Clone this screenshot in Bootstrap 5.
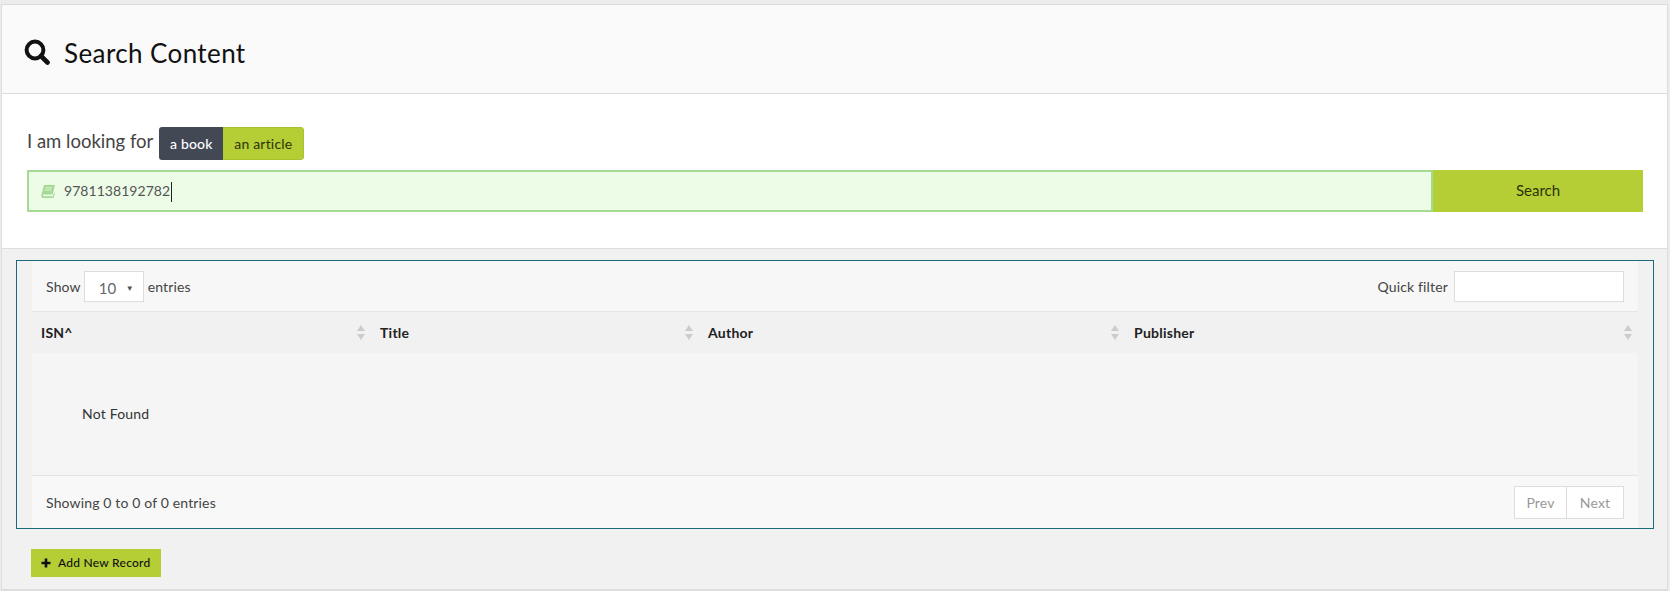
<!DOCTYPE html>
<html lang="en">
<head>
<meta charset="utf-8">
<title>Search Content</title>
<link href="https://cdn.jsdelivr.net/npm/bootstrap@5.3.0/dist/css/bootstrap.min.css" rel="stylesheet">
<style>
html,body{height:591px;overflow:hidden}
body{background:#ececec;font-family:Lato,"Noto Sans",sans-serif;font-size:14px;color:#333;padding:4px 2px 0 1px}
.shell{height:587px;border:1px solid #ddd;border-bottom-width:2px;background:#f1f1f1;display:flex;flex-direction:column}
.head-bar{height:89px;flex:none;background:#fafafa;border-bottom:1px solid #ddd;padding:6px 22px 0;gap:14px}
.head-bar h1{font-size:26px;font-weight:400;color:#111;margin:4px 0 0;letter-spacing:.4px}
.form-area{height:155px;flex:none;background:#fff;border-bottom:1px solid #ddd;padding:33px 24px 0 25px}
.look-row{height:33px;margin-bottom:10px;gap:6px;font-size:18.5px;color:#444;font-weight:400}
.look-row>span{position:relative;top:-2px}
.toggle-pair{height:33px;border-radius:3px;overflow:hidden;font-size:14px;letter-spacing:.2px;font-weight:400}
.tog{display:flex;align-items:center;justify-content:center;height:100%}
.tog-on{width:64px;background:#424955;color:#fff;font-weight:500}
.tog-off{width:81px;background:#b5ce36;color:#2c3306;border:1px solid #a9c22e;border-left:0;border-radius:0 3px 3px 0}
.isbn-wrap{flex:1;height:42px;background:#edfce7;border:2px solid #a5da95;padding-left:12px;gap:9px;font-size:14px;color:#555;letter-spacing:.05px}
.caret-bar{width:1px;height:20px;background:#222;display:inline-block;vertical-align:middle;margin-left:1px}
.go-btn{width:210px;height:42px;background:#b5ce36;color:#2c3306;font-size:15px;padding-bottom:2px;display:flex;align-items:center;justify-content:center}
.data-box{margin:11px 14px 0 14px;height:269px;border:1px solid #1a6a7c;padding:0 15px;display:flex;flex-direction:column;background:#f1f1f1;width:1638px}
.top-row{height:51px;flex:none;background:#f7f7f7;border-bottom:1px solid #e4e4e4;padding:0 14px;font-size:14px;color:#444;letter-spacing:.15px}
.fake-select{width:60px;height:31px;background:#fff;border:1px solid #ddd;margin:0 4px 0 3px;padding:5px 9px 0 14px;color:#666;font-size:15px}
.fake-select i{font-style:normal;font-size:8px;color:#555;line-height:22px}
.fake-input{width:170px;height:31px;background:#fff;border:1px solid #ddd;margin-left:6px}
.res-table{table-layout:fixed;width:100%;margin:0;border-collapse:collapse}
.res-table th{height:41px;background:#f1f1f1;font-weight:700;color:#222;font-size:14px;padding:0 9px 1px;position:relative;vertical-align:middle;border:0;letter-spacing:.25px}
.res-table td{height:122px;background:#f5f5f5;padding:0 0 2px 50px;font-size:14px;color:#333;border:0;vertical-align:middle;letter-spacing:.2px}
.sort-ic{position:absolute;right:6px;top:13px}
.bot-row{flex:1;background:#f8f8f8;border-top:1px solid #e4e4e4;padding:0 14px;font-size:14px;color:#444;letter-spacing:.15px}
.pager{height:33px;border:1px solid #ddd;background:#fff;color:#999;font-size:14px}
.pager span{display:flex;align-items:center;justify-content:center;height:100%}
.pager span:first-child{width:52px;border-right:1px solid #ddd}
.pager span:last-child{width:56px}
.add-btn{margin:20px 0 0 29px;width:130px;height:28px;background:#b5ce36;color:#111;font-size:12px;font-weight:500;gap:7px;padding-left:10px;letter-spacing:.25px}
</style>
</head>
<body>
<div class="shell">
  <div class="head-bar d-flex align-items-center">
    <svg width="26" height="26" viewBox="0 0 26 26" aria-hidden="true"><circle cx="11" cy="11" r="8.4" fill="none" stroke="#111" stroke-width="4"/><path d="M17 17l6.5 6.5" stroke="#111" stroke-width="4.6" stroke-linecap="round"/></svg>
    <h1>Search Content</h1>
  </div>
  <div class="form-area">
    <div class="look-row d-flex align-items-center">
      <span>I am looking for</span>
      <div class="toggle-pair d-flex">
        <div class="tog tog-on">a book</div>
        <div class="tog tog-off">an article</div>
      </div>
    </div>
    <div class="d-flex">
      <div class="isbn-wrap d-flex align-items-center">
        <svg width="14" height="13" viewBox="0 0 14 13" aria-hidden="true"><path d="M3 0H14L11.6 9.6H2.6C1.8 9.6 1.8 11.2 2.6 11.2H12L13.2 7.4L14 8.5L12.6 13H2.2C.6 13 0 11.6.4 10Z" fill="#a5da95"/><path d="M4.6 2.8H11M4 5H10.4" stroke="#edfce7" stroke-width=".8"/></svg>
        <span>9781138192782<span class="caret-bar"></span></span>
      </div>
      <div class="go-btn">Search</div>
    </div>
  </div>
  <div class="data-box">
    <div class="top-row d-flex align-items-center justify-content-between">
      <div class="d-flex align-items-center">Show<div class="fake-select d-flex justify-content-between"><span>10</span><i>▼</i></div>entries</div>
      <div class="d-flex align-items-center">Quick filter<div class="fake-input"></div></div>
    </div>
    <table class="res-table">
      <colgroup><col style="width:339px"><col style="width:328px"><col style="width:426px"><col></colgroup>
      <thead><tr>
        <th>ISN^<svg class="sort-ic" width="8" height="15" viewBox="0 0 8 15"><path d="M4 0l4 6H0zM4 15l4-6H0z" fill="#ccc"/></svg></th>
        <th>Title<svg class="sort-ic" width="8" height="15" viewBox="0 0 8 15"><path d="M4 0l4 6H0zM4 15l4-6H0z" fill="#ccc"/></svg></th>
        <th>Author<svg class="sort-ic" width="8" height="15" viewBox="0 0 8 15"><path d="M4 0l4 6H0zM4 15l4-6H0z" fill="#ccc"/></svg></th>
        <th>Publisher<svg class="sort-ic" width="8" height="15" viewBox="0 0 8 15"><path d="M4 0l4 6H0zM4 15l4-6H0z" fill="#ccc"/></svg></th>
      </tr></thead>
      <tbody><tr><td colspan="4">Not Found</td></tr></tbody>
    </table>
    <div class="bot-row d-flex align-items-center justify-content-between">
      <span>Showing 0 to 0 of 0 entries</span>
      <div class="pager d-flex"><span>Prev</span><span>Next</span></div>
    </div>
  </div>
  <div class="add-btn d-flex align-items-center">
    <svg width="10" height="10" viewBox="0 0 10 10" aria-hidden="true"><path d="M5 .5v9M.5 5h9" stroke="#111" stroke-width="2.6"/></svg>
    <span>Add New Record</span>
  </div>
</div>
<script src="https://cdn.jsdelivr.net/npm/bootstrap@5.3.0/dist/js/bootstrap.bundle.min.js"></script>
</body>
</html>
